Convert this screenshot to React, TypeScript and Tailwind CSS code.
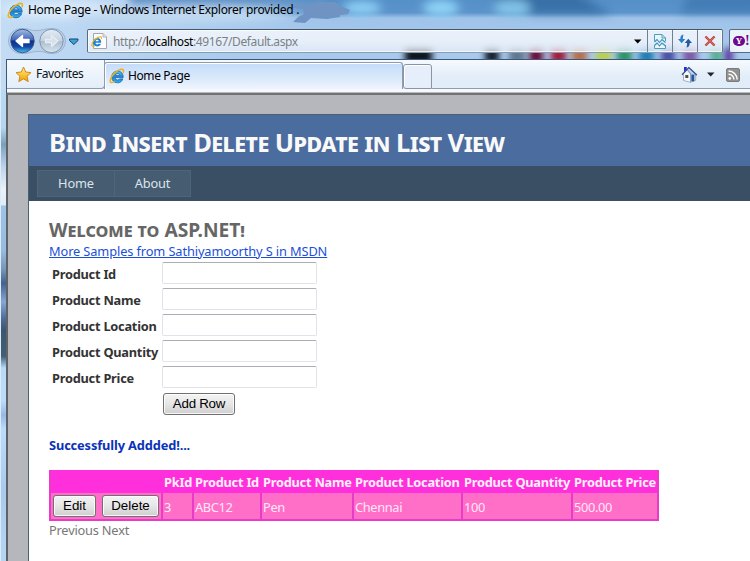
import React from "react";

const swatches = [
  { x: 405, w: 27, c: "#0d151d" },
  { x: 485, w: 14, c: "#18232f" },
  { x: 509, w: 16, c: "#5f7890" },
  { x: 529, w: 14, c: "#6e1038" },
  { x: 551, w: 15, c: "#a41c3a" },
  { x: 572, w: 15, c: "#b8704c" },
  { x: 596, w: 15, c: "#b8d050" },
  { x: 617, w: 15, c: "#2a9468" },
  { x: 639, w: 15, c: "#1a80b8" },
  { x: 661, w: 14, c: "#4850a8" },
  { x: 683, w: 14, c: "#8058a8" },
  { x: 711, w: 10, c: "#50b088" },
  { x: 724, w: 9, c: "#6038a8" },
];

// Translucent window frame with the blurred desktop showing through
function Glass() {
  return (
    <svg className="absolute inset-0 h-[561px] w-[750px]" viewBox="0 0 750 561" aria-hidden="true">
      <defs>
        <linearGradient id="top" x1="0" x2="0" y1="0" y2="1">
          <stop offset="0" stopColor="#5590c8" />
          <stop offset="0.14" stopColor="#5c94cb" />
          <stop offset="0.2" stopColor="#a0c3e9" />
          <stop offset="0.6" stopColor="#a9caef" />
          <stop offset="1" stopColor="#9dbfe6" />
        </linearGradient>
        <linearGradient id="topLeft" x1="0" x2="1" y1="0" y2="0">
          <stop offset="0" stopColor="#c3dcf4" />
          <stop offset="0.7" stopColor="#a9cbee" />
          <stop offset="1" stopColor="#a9cbee" stopOpacity="0" />
        </linearGradient>
        <linearGradient id="side" x1="0" x2="0" y1="90" y2="561" gradientUnits="userSpaceOnUse">
          <stop offset="0" stopColor="#b9daf5" />
          <stop offset="0.08" stopColor="#b5d5f0" />
          <stop offset="0.115" stopColor="#7d9fba" />
          <stop offset="0.16" stopColor="#b9d1e8" />
          <stop offset="0.21" stopColor="#eaf1f9" />
          <stop offset="0.243" stopColor="#e2edf8" />
          <stop offset="0.247" stopColor="#9ec3e8" />
          <stop offset="0.34" stopColor="#98bce0" />
          <stop offset="0.38" stopColor="#7897ba" />
          <stop offset="0.41" stopColor="#42638f" />
          <stop offset="0.45" stopColor="#87a8d3" />
          <stop offset="0.485" stopColor="#4e6d99" />
          <stop offset="0.51" stopColor="#3d566f" />
          <stop offset="0.565" stopColor="#425e75" />
          <stop offset="0.59" stopColor="#b8daf8" />
          <stop offset="0.66" stopColor="#bcdcfb" />
          <stop offset="0.69" stopColor="#97b8e4" />
          <stop offset="0.72" stopColor="#bbdcfa" />
          <stop offset="0.85" stopColor="#a9caee" />
          <stop offset="1" stopColor="#b5d6f3" />
        </linearGradient>
        <filter id="soft" x="-50%" y="-80%" width="200%" height="260%">
          <feGaussianBlur stdDeviation="5" />
        </filter>
        <filter id="soft2" x="-50%" y="-50%" width="200%" height="200%">
          <feGaussianBlur stdDeviation="3" />
        </filter>
      </defs>
      <rect width="750" height="90" fill="url(#top)" />
      <rect width="330" height="90" fill="url(#topLeft)" />
      <g filter="url(#soft)">
        <rect x="130" y="-12" width="190" height="17" fill="#5d8fc4" />
        <path d="M485 -10H570L612 14H520Z" fill="#2f689f" opacity="0.8" />
        <path d="M690 -10H760V13H680Z" fill="#3f78b0" opacity="0.8" />
        <ellipse cx="362" cy="8" rx="19" ry="7" fill="#8dd0f6" />
        <ellipse cx="441" cy="8" rx="18" ry="8" fill="#8fd4f8" />
        <ellipse cx="512" cy="8" rx="18" ry="8" fill="#83c4e8" />
        <ellipse cx="60" cy="10" rx="60" ry="9" fill="#dcebf9" />
        <ellipse cx="180" cy="15" rx="110" ry="6" fill="#c4dbf2" />
      </g>
      <g filter="url(#soft2)">
        {swatches.map((s) => (
          <rect key={s.x} x={s.x} y="48" width={s.w} height="16" fill={s.c} />
        ))}
      </g>
      <rect y="90" width="7" height="471" fill="url(#side)" />
      <rect width="1" height="561" fill="#dcebf7" />
    </svg>
  );
}

function IELogo({ size }: { size: number }) {
  return (
    <svg width={size} height={size} viewBox="0 0 16 16" className="shrink-0" aria-hidden="true">
      <defs>
        <linearGradient id="ie" x1="0" x2="0" y1="0" y2="1">
          <stop offset="0" stopColor="#5cc4f4" />
          <stop offset="0.5" stopColor="#1f82d0" />
          <stop offset="1" stopColor="#2fb2ee" />
        </linearGradient>
      </defs>
      <path
        d="M14.2 9.6H6.3c.1 1.5 1 2.4 2.3 2.4.9 0 1.500-.4 1.900-1.100h3.300c-.8 2.500-2.700 3.900-5.300 3.900-3.500 0-5.700-2.200-5.700-5.700 0-3.600 2.300-6 5.700-6 3.700 0 5.800 2.500 5.700 6.500zM10.700 7.400C10.600 6.200 9.800 5.500 8.600 5.500c-1.200 0-2 .7-2.200 1.900z"
        fill="url(#ie)"
        stroke="#1766ae"
        strokeWidth="0.8"
      />
      <path
        d="M14.300 4.300C15.300 1.300 13.200.4 9.700 2.200 5.500 4.300 1.600 9 1.200 12.300c-.3 2.500 1.500 2.700 3.900 1.500"
        fill="none"
        stroke="#eeb01c"
        strokeWidth="1.5"
        strokeLinecap="round"
      />
    </svg>
  );
}

function NavButtons() {
  return (
    <svg width="80" height="28" viewBox="0 0 80 28" className="shrink-0" aria-hidden="true">
      <defs>
        <linearGradient id="back" x1="0" x2="0" y1="0" y2="1">
          <stop offset="0" stopColor="#a5bde6" />
          <stop offset="0.45" stopColor="#3e66b5" />
          <stop offset="0.5" stopColor="#0d2e86" />
          <stop offset="0.75" stopColor="#1248a8" />
          <stop offset="1" stopColor="#49c4f4" />
        </linearGradient>
        <linearGradient id="fwd" x1="0" x2="0" y1="0" y2="1">
          <stop offset="0" stopColor="#e4edf6" />
          <stop offset="0.48" stopColor="#c6d3e1" />
          <stop offset="0.52" stopColor="#adbdce" />
          <stop offset="1" stopColor="#d8e5f1" />
        </linearGradient>
      </defs>
      <path d="M14 1.500C24 1.500 22 4 30 3.500S38 1.500 46 1.500A12.500 12.500 0 0 1 46 26.500C38 26.500 38 24 30 24.500S24 26.500 14 26.500A12.500 12.500 0 0 1 14 1.500Z" fill="#b9d0ea" stroke="#90abc9" strokeWidth="0.8" />
      <circle cx="15.500" cy="14" r="11.700" fill="url(#back)" stroke="#354f83" strokeWidth="0.9" />
      <path d="M9 14L15.500 8.500V12.300H22V15.700H15.500V19.500Z" fill="#fff" stroke="#fff" strokeWidth="1.300" strokeLinejoin="round" />
      <circle cx="44.500" cy="14" r="11.700" fill="url(#fwd)" stroke="#8095ac" strokeWidth="1" />
      <path d="M51 14L44.500 8.500V12.300H38.500V15.700H44.500V19.500Z" fill="#d7e1eb" stroke="#e6edf4" strokeWidth="1.200" strokeLinejoin="round" />
      <path d="M62.500 12H71V13.500L66.800 17.500L62.500 13.500Z" fill="#3aa4d8" stroke="#16436f" strokeWidth="1" strokeLinejoin="round" />
    </svg>
  );
}

function PageIcon() {
  return (
    <svg width="17" height="18" viewBox="0 0 17 18" className="shrink-0" aria-hidden="true">
      <path d="M2.500 1.500H12L15.500 5V16.500H2.500Z" fill="#fdfdfd" stroke="#a3a7ab" />
      <path d="M12 1.500V5H15.500" fill="#e4e4e4" stroke="#a3a7ab" strokeWidth="0.800" />
      <g transform="translate(0 3.800) scale(0.720)">
        <path d="M14.200 9.600H6.300c.1 1.500 1 2.400 2.300 2.400.9 0 1.500-.4 1.900-1.100h3.300c-.8 2.500-2.700 3.900-5.300 3.900-3.500 0-5.700-2.200-5.700-5.700 0-3.600 2.300-6 5.700-6 3.700 0 5.800 2.500 5.700 6.500zM10.700 7.400C10.600 6.200 9.800 5.500 8.600 5.500c-1.200 0-2 .7-2.200 1.900z" fill="#1684d2" />
        <path d="M14.300 4.300C15.300 1.300 13.200.4 9.700 2.200 5.500 4.300 1.600 9 1.200 12.300c-.3 2.500 1.500 2.700 3.900 1.500" fill="none" stroke="#eeb01c" strokeWidth="1.600" />
      </g>
    </svg>
  );
}

function AddressBar() {
  return (
    <div className="flex h-6 w-[636px] shrink-0 rounded-[2px] border border-t-[#46566a] border-r-[#66788c] border-b-[#8b9bac] border-l-[#5b6b7e] bg-gradient-to-b from-[#eef3fa]/95 via-[#eef3fa]/90 to-[#eef3fa]/70 shadow-[inset_0_0_0_1px_rgba(255,255,255,0.7)]">
      <div className="flex flex-1 items-center pl-[3px]">
        <PageIcon />
        <span className="ml-[5px] pt-px text-[12px] tracking-[-0.400px] whitespace-pre text-[#7b8087]">
          http://<span className="text-black">localhost</span>:49167/Default.aspx
        </span>
        <svg width="8" height="5" viewBox="0 0 8 5" className="mt-px mr-[5px] ml-auto" aria-hidden="true">
          <path d="M0 0.500H7.500L3.700 4.500Z" fill="#000" />
        </svg>
      </div>
      <div className="flex w-[25px] items-center justify-center border-l border-[#6f8092]">
        <svg width="12" height="15" viewBox="0 0 12 15" aria-hidden="true">
          <path d="M0.500 7V0.500H8L11.500 4V7M0.500 11V14.500H11.500V11" fill="#e8f5fb" stroke="#4d9fb9" />
          <path d="M8 0.500V4H11.500" fill="none" stroke="#4d9fb9" />
          <path d="M0.500 8L3 5.500L5.500 8.500L8 5.500L11.500 8.500M0.500 11.500L3 9L5.500 12L8 9L11.500 12" fill="none" stroke="#3b91b4" strokeWidth="1.100" />
        </svg>
      </div>
      <div className="flex w-[25px] items-center justify-center border-l border-[#6f8092]">
        <svg width="14" height="14" viewBox="0 0 14 14" aria-hidden="true">
          <path d="M5.500 0.500C3 1 2.300 2.500 2.300 5H0L3.700 9.200L7.300 5H4.900C4.900 3.500 5 2 5.500 0.500Z" fill="#2d7fc6" />
          <path d="M8.500 13.500C11 13 11.700 11.500 11.700 9H14L10.300 4.800L6.700 9H9.100C9.100 10.500 9 12 8.500 13.500Z" fill="#24599f" />
        </svg>
      </div>
      <div className="flex w-[25px] items-center justify-center border-l border-[#6f8092]">
        <svg width="12" height="12" viewBox="0 0 12 12" aria-hidden="true">
          <path d="M1.500 1.500L10.500 10.500M10.500 1.500L1.500 10.500" stroke="#a93c35" strokeWidth="2.400" />
          <path d="M1.500 1.500L10.500 10.500M10.500 1.500L1.500 10.500" stroke="#d9655d" strokeWidth="1.200" />
        </svg>
      </div>
    </div>
  );
}

function SearchBox() {
  return (
    <div className="ml-[6px] flex h-6 w-[40px] shrink-0 items-center rounded-[2px] border border-[#5b6b7e] bg-[#f3f7fc]/90 pl-[3px]">
      <span className="flex h-[10px] w-[12px] items-center justify-center rounded-full bg-[#6d0a8c] font-['Liberation_Serif',serif] text-[9px] leading-none font-bold text-white">Y</span>
      <span className="font-['Liberation_Serif',serif] text-[14px] leading-none font-bold text-[#6d0a8c]">!</span>
    </div>
  );
}

function TabBar() {
  return (
    <div className="relative ml-[6px] flex h-[34px] shrink-0 overflow-hidden border-t border-l border-[#3d5675] bg-gradient-to-b from-[#f6fafe] via-[#e2edf9] to-[#e0ecf9]">
      <div className="flex h-[29px] w-[98px] shrink-0 items-center rounded-br-[4px] border-r border-b border-[#8c9db2] bg-gradient-to-b from-[#f6fafe] to-[#e3edf9] pl-[8px]">
        <svg width="17" height="17" viewBox="0 0 17 17" aria-hidden="true">
          <defs>
            <linearGradient id="star" x1="0" x2="0" y1="0" y2="1">
              <stop offset="0" stopColor="#fff0a0" />
              <stop offset="0.500" stopColor="#fcc838" />
              <stop offset="1" stopColor="#f29a12" />
            </linearGradient>
          </defs>
          <path d="M8.500 1L10.700 6L16 6.600L12.100 10.200L13.200 15.600L8.500 12.900L3.800 15.600L4.900 10.200L1 6.600L6.300 6Z" fill="url(#star)" stroke="#c98212" strokeWidth="0.900" strokeLinejoin="round" />
        </svg>
        <span className="ml-[4px] text-[12px] tracking-[-0.420px] text-[#0c1420]">Favorites</span>
      </div>
      <div className="mt-[2px] -ml-px flex h-[32px] w-[299px] shrink-0 items-center rounded-t-[3px] border border-b-0 border-[#8c9db2] bg-gradient-to-b from-[#c3dcfa] via-[#dbe9fb] to-[#f8fafe] pb-[5px] pl-[4px] shadow-[inset_1px_1px_0_#fff]">
        <IELogo size={16} />
        <span className="ml-[3px] text-[12px] tracking-[-0.400px] text-black">Home Page</span>
      </div>
      <div className="mt-[4px] h-[25px] w-[29px] shrink-0 rounded-t-[3px] rounded-bl-[3px] border border-[#8c93a2] bg-[#e5eefa] shadow-[inset_1px_1px_0_#fff]" />
      <div className="flex h-[29px] flex-1 items-center border-b border-[#8c9db2]">
        <svg width="17" height="17" viewBox="0 0 17 17" className="ml-[249px] shrink-0" aria-hidden="true">
          <path d="M2.500 7.500V14.500L9.500 16.300V8L6 4Z" fill="#f4f6f9" stroke="#8d97a6" strokeWidth="0.700" />
          <path d="M9.500 8V16.300L14.700 14.300V8L9.500 3Z" fill="#dfe5ee" stroke="#8d97a6" strokeWidth="0.700" />
          <path d="M8 1.500L15.800 9L10 8.300L6.500 3.500Z" fill="#c3d6e8" stroke="#6c86a8" strokeWidth="0.700" />
          <path d="M3 1H5.800V3.800L3 6Z" fill="#2731c8" />
          <path d="M1 8.700L7.800 1.600L15.800 9" fill="none" stroke="#34529a" strokeWidth="1.300" />
          <rect x="4.300" y="9" width="3" height="3" fill="#4b5050" />
          <rect x="10.300" y="9" width="3" height="6.300" fill="#1959a6" />
        </svg>
        <svg width="8" height="5" viewBox="0 0 8 5" className="ml-[9px]" aria-hidden="true">
          <path d="M0 0.500H7.500L3.700 4.500Z" fill="#1c242e" />
        </svg>
        <svg width="14" height="14" viewBox="0 0 14 14" className="mt-px ml-[11px] shrink-0" aria-hidden="true">
          <rect x="0.500" y="0.500" width="13" height="13" rx="1.500" fill="#919191" stroke="#7b7b7b" />
          <circle cx="3.800" cy="10.400" r="1.300" fill="#fff" />
          <path d="M2.500 6.200A5.300 5.300 0 0 1 7.900 11.600M2.500 3A8.500 8.500 0 0 1 11.100 11.600" fill="none" stroke="#fff" strokeWidth="1.500" />
        </svg>
      </div>
      <div className="absolute right-0 bottom-px left-0 h-[3px] bg-[#f7f9fc]" />
      <div className="absolute right-0 bottom-0 left-0 h-px bg-[#b7babd]" />
    </div>
  );
}

const fields = ["Product Id", "Product Name", "Product Location", "Product Quantity", "Product Price"];

const buttonClass =
  "flex h-[22px] items-center justify-center rounded-[3px] border border-[#707070] bg-gradient-to-b from-[#f4f4f4] via-[#e6e6e6] to-[#cfcfcf] font-['Liberation_Sans',Arial,sans-serif] text-[13.330px] text-black shadow-[inset_0_0_0_1px_rgba(255,255,255,0.8)]";

const columns = [
  { title: "PkId", value: "3" },
  { title: "Product Id", value: "ABC12" },
  { title: "Product Name", value: "Pen" },
  { title: "Product Location", value: "Chennai" },
  { title: "Product Quantity", value: "100" },
  { title: "Product Price", value: "500.00" },
];

function ProductList() {
  return (
    <div className="mt-[15px] grid w-[610px] grid-cols-[110px_29px_66px_90px_107px_108px_84px] grid-rows-[21px_26px] gap-x-[2px] gap-y-[2px] border-2 border-t-0 border-[#ea3ac8] bg-[linear-gradient(#ff2fdc_23px,#ea3ac8_23px)]">
      <div />
      {columns.map((c) => (
        <div key={c.title} className="pt-[2px] pl-px text-[12.800px] leading-[20px] font-bold tracking-[-0.240px] whitespace-nowrap text-[#fff0fb]">
          {c.title}
        </div>
      ))}
      <div className="flex items-center gap-[6px] bg-[#ff6ec7] pl-[2px]">
        <button className={`${buttonClass} w-[43px]`}>Edit</button>
        <button className={`${buttonClass} w-[57px]`}>Delete</button>
      </div>
      {columns.map((c) => (
        <div key={c.title} className="bg-[#ff6ec7] pt-[4px] pl-px text-[12.800px] leading-[20px] tracking-[-0.340px] text-[#ffe9f8]">
          {c.value}
        </div>
      ))}
    </div>
  );
}

function WebPage() {
  return (
    <div className="ml-[6px] flex flex-1 border-t-2 border-l-2 border-t-[#707274] border-l-[#5c6468] bg-[#b6b7bc] pt-[19px] pl-[20px]">
      <div className="flex flex-1 flex-col border-t border-l border-[#496077] bg-white">
        <header className="h-[51px] shrink-0 bg-[#4b6c9e] pt-[11px] pl-[20px]">
          <h1 className="text-[25.600px] leading-[34px] font-bold tracking-[-0.600px] whitespace-nowrap text-[#f9f9f9] [font-variant:small-caps]">
            Bind Insert Delete Update in List View
          </h1>
        </header>
        <nav className="flex h-[35px] shrink-0 bg-[#3a4f63] pt-[4px] pl-[8px] text-[12.800px] tracking-[-0.150px] text-[#dde4ec]">
          <a className="flex h-[27px] w-[78px] items-center justify-center border border-[#4e667d] bg-[#465c71] pt-px">Home</a>
          <a className="-ml-px flex h-[27px] w-[77px] items-center justify-center border border-[#4e667d] bg-[#465c71] pt-px">About</a>
        </nav>
        <main className="flex flex-col items-start pt-[17px] pl-[20px] text-[12.800px]">
          <h2 className="text-[19.200px] leading-[24px] font-bold tracking-[-0.030px] whitespace-nowrap text-[#666] [font-variant:small-caps]">Welcome to ASP.NET!</h2>
          <a className="text-[12.800px] leading-[18px] tracking-[-0.110px] whitespace-nowrap text-[#1b4fd8] underline">More Samples from Sathiyamoorthy S in MSDN</a>
          <div className="mt-[2px] flex flex-col gap-[3px] pl-[3px]">
            {fields.map((f) => (
              <label key={f} className="flex h-[23px] items-center">
                <span className="w-[110px] pt-[3px] font-bold tracking-[-0.240px] whitespace-nowrap text-[#333]">{f}</span>
                <input className="h-[22px] w-[155px] self-start rounded-[2px] border border-[#e2e3ea] border-t-[#abadb3] bg-white" />
              </label>
            ))}
            <button className={`${buttonClass} mt-px ml-[111px] w-[72px] tracking-[-0.250px]`}>Add Row</button>
          </div>
          <p className="mt-[20px] leading-[20px] font-bold tracking-[-0.120px] whitespace-nowrap text-[#0a33b8]">Successfully Addded!...</p>
          <ProductList />
          <p className="-mt-px leading-[20px] tracking-[-0.200px] text-[#777]">Previous Next</p>
        </main>
      </div>
    </div>
  );
}

export default function App() {
  return (
    <div className="relative h-[561px] w-[750px] overflow-hidden bg-[#a9caef] font-['Noto_Sans',sans-serif]">
      <Glass />
      <div className="relative flex h-full flex-col">
        <div className="flex h-[29px] shrink-0 items-start pt-[2px] pl-[7px]">
          <IELogo size={17} />
          <span className="ml-[4px] text-[12px] leading-[16px] tracking-[-0.300px] whitespace-nowrap text-black">Home Page - Windows Internet Explorer provided .</span>
          <svg width="58" height="24" viewBox="0 0 58 24" className="absolute top-0 left-[293px]" aria-hidden="true">
            <path d="M0 6L14 5L25 2H42L50 7L57 10L55 14L47 15V17L34 19L18 18L12 23L0 22L5 17L11 14L10 9L0 8Z" fill="#6f93c3" />
          </svg>
        </div>
        <div className="flex h-[30px] shrink-0 items-start pl-[7px]">
          <div className="-mt-[2px]">
            <NavButtons />
          </div>
          <AddressBar />
          <SearchBox />
        </div>
        <TabBar />
        <WebPage />
      </div>
    </div>
  );
}
